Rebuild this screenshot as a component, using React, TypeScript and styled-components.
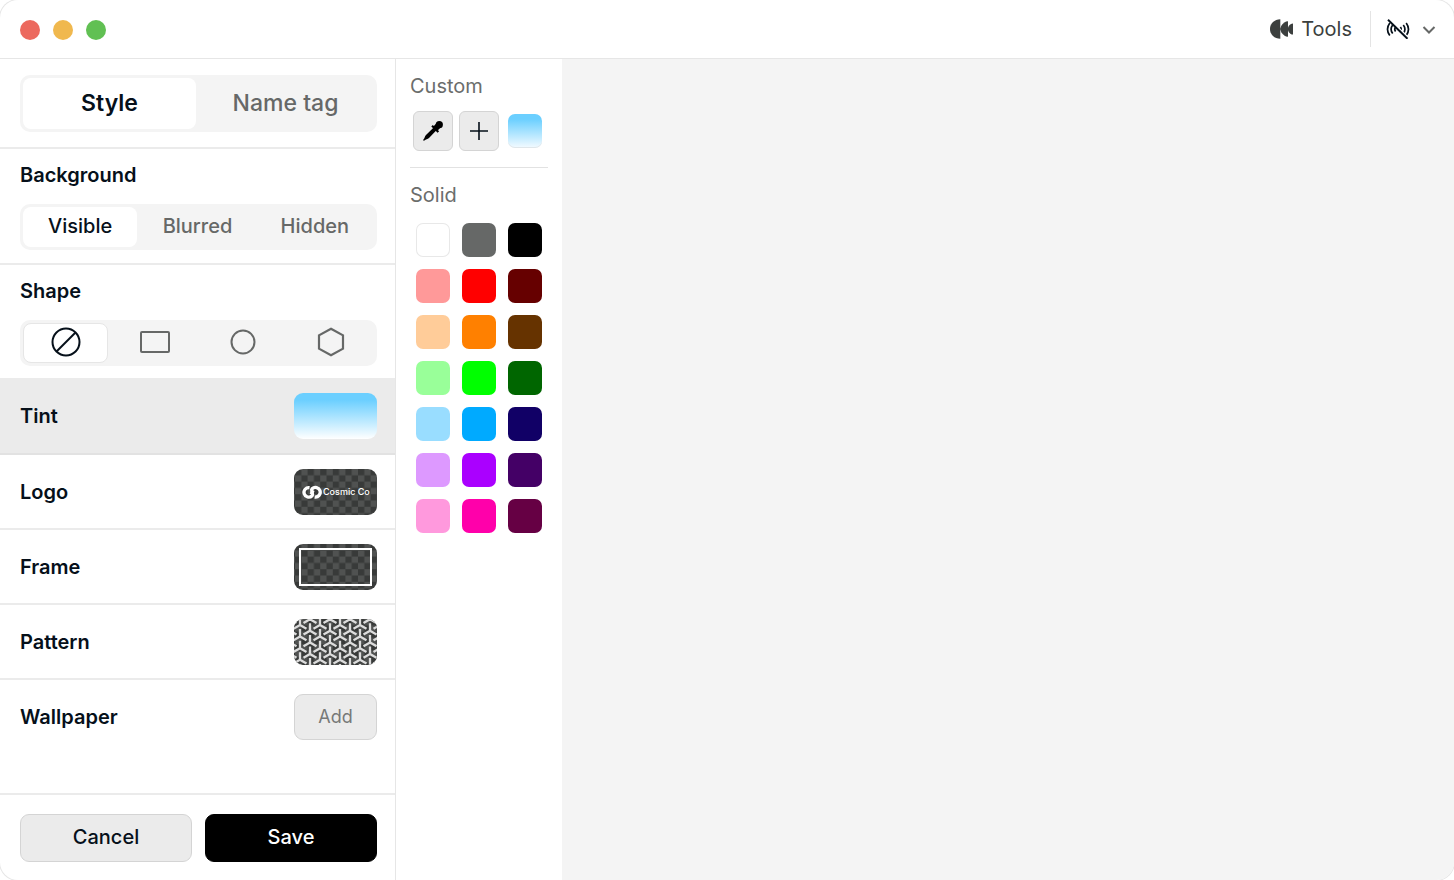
import React, { useState } from "react";
import styled, { createGlobalStyle, css } from "styled-components";

const GlobalStyle = createGlobalStyle`
  * { box-sizing: border-box; }
  body {
    margin: 0;
    background: #fff;
    font-family: Inter, "Liberation Sans", sans-serif;
    font-size: 20px;
    line-height: 24px;
    color: #06101a;
  }
  button { font: inherit; color: inherit; padding: 0; border: 0; background: none; cursor: pointer; }
`;

const Window = styled.div`
  display: flex;
  flex-direction: column;
  min-height: 100vh;
  border-radius: 18px;
  overflow: hidden;
  background: #fff;
  box-shadow: 0 0 0 1px #e6e6e6;
`;

const TitleBar = styled.header`
  display: flex;
  align-items: center;
  justify-content: space-between;
  height: 59px;
  padding: 0 18px 0 20px;
  border-bottom: 1px solid #e6e6e6;
`;

const Lights = styled.div`
  display: flex;
  gap: 13px;
  padding-top: 2px;
`;

const Light = styled.button<{ $color: string }>`
  width: 20px;
  height: 20px;
  border-radius: 50%;
  && { background: ${(p) => p.$color}; }
`;

const Actions = styled.div`
  display: flex;
  align-items: center;
`;

const ToolsButton = styled.button`
  display: flex;
  align-items: center;
  gap: 8px;
  && {
    padding-right: 18px;
    color: #3c3f3e;
  }
`;

const CameraButton = styled.button`
  display: flex;
  align-items: center;
  gap: 12px;
  height: 36px;
  && {
    padding-left: 15px;
    border-left: 1px solid #e4e4e4;
  }
`;

const Body = styled.div`
  display: flex;
  flex: 1;
`;

const Sidebar = styled.aside`
  display: flex;
  flex-direction: column;
  flex: none;
  width: 396px;
  border-right: 1px solid #e6e6e6;
`;

const Section = styled.section<{ $last?: boolean }>`
  padding: 14px 18px ${(p) => (p.$last ? "12px" : "13px")} 20px;
  border-bottom: ${(p) => (p.$last ? "0" : "2px")} solid #ebebeb;
`;

const TabSection = styled(Section)`
  padding-top: 16px;
  padding-bottom: 15px;
`;

const Group = styled.fieldset`
  margin: 0;
  padding: 0;
  border: 0;
  min-width: 0;
`;

const GroupTitle = styled.legend`
  padding: 0;
  margin-bottom: 17px;
  font-weight: 600;
`;

const Segments = styled.div<{ $large?: boolean; $wide?: boolean }>`
  display: flex;
  gap: ${(p) => (p.$wide ? 5 : 3)}px;
  height: ${(p) => (p.$large ? 57 : 46)}px;
  padding: 3px 5px 3px 3px;
  border-radius: 10px;
  background: #f4f4f4;
`;

const segment = css<{ $active: boolean }>`
  flex: 1 1 0;
  display: flex;
  align-items: center;
  justify-content: center;
  padding-bottom: 2px;
  border-radius: 8px;
  color: ${(p) => (p.$active ? "#06101a" : "#666867")};
  background: ${(p) => (p.$active ? "#fff" : "transparent")};
`;

const Tab = styled.button<{ $active: boolean }>`
  && {
    ${segment}
    font-size: 23px;
    font-weight: ${(p) => (p.$active ? 600 : 500)};
  }
`;

const Option = styled.label<{ $active: boolean; $outlined?: boolean }>`
  ${segment}
  position: relative;
  font-weight: 500;
  cursor: pointer;
  ${(p) => p.$outlined && p.$active && "border: 1px solid #e6e6e6;"}
`;

const HiddenRadio = styled.input`
  position: absolute;
  inset: 0;
  width: 100%;
  height: 100%;
  margin: 0;
  opacity: 0;
  cursor: pointer;
`;

const LayerRow = styled.button<{ $active?: boolean; $last?: boolean }>`
  && {
    display: flex;
    align-items: center;
    justify-content: space-between;
    height: ${(p) => (p.$active ? 77 : 75)}px;
    padding: 0 18px 0 20px;
    font-weight: 600;
    border-bottom: 2px solid ${(p) => (p.$last ? "transparent" : p.$active ? "#e2e2e2" : "#ebebeb")};
    background: ${(p) => (p.$active ? "#ebebeb" : "transparent")};
  }
`;

const Thumb = styled.span`
  display: flex;
  width: 83px;
  height: 46px;
  border-radius: 9px;
  overflow: hidden;
`;

const TintThumb = styled(Thumb)`
  background: linear-gradient(#6bcfff 15%, #fff);
`;

const AddThumb = styled(Thumb)`
  align-items: center;
  justify-content: center;
  border: 1px solid #d4d4d4;
  background: #ebebeb;
  color: #777978;
  font-size: 18px;
  font-weight: 400;
`;

const Footer = styled.footer`
  display: grid;
  grid-template-columns: 1fr 1fr;
  gap: 13px;
  margin-top: auto;
  padding: 19px 18px 18px 20px;
  border-top: 2px solid #ebebeb;
`;

const FooterButton = styled.button<{ $primary?: boolean }>`
  && {
    height: 48px;
    padding-bottom: 2px;
    border-radius: 9px;
    font-weight: 500;
    border: 1px solid ${(p) => (p.$primary ? "#000" : "#d4d4d4")};
    background: ${(p) => (p.$primary ? "#000" : "#ebebeb")};
    color: ${(p) => (p.$primary ? "#fff" : "#06101a")};
  }
`;

const Picker = styled.aside`
  flex: none;
  width: 166px;
  padding: 15px 14px;
`;

const PickerGroup = styled.section`
  & + & {
    margin-top: 13px;
    padding-top: 15px;
    border-top: 1px solid #e2e2e2;
  }
`;

const PickerTitle = styled.h2`
  margin: 0 0 10px;
  font-size: 20px;
  font-weight: 400;
  color: #6b6d6c;
`;

const SwatchGrid = styled.div`
  display: grid;
  grid-template-columns: repeat(3, 46px);
  grid-auto-rows: 46px;
  place-items: center;
`;

const PickerTool = styled.button`
  && {
    display: flex;
    align-items: center;
    justify-content: center;
    width: 40px;
    height: 40px;
    border: 1px solid #d4d4d4;
    border-radius: 6px;
    background: #ebebeb;
  }
`;

const Swatch = styled.button<{ $fill: string; $outlined?: boolean }>`
  && {
    width: 34px;
    height: 34px;
    border-radius: 7px;
    background: ${(p) => p.$fill};
    ${(p) => p.$outlined && "box-shadow: inset 0 0 0 1px #e8e8e8;"}
  }
`;

const GradientSwatch = styled(Swatch)`
  && { box-shadow: inset 0 -1px 0 #dfe6ea; }
`;

const Canvas = styled.main`
  flex: 1;
  background: #f4f4f4;
`;

const ToolsIcon = () => (
  <svg width="24" height="22" viewBox="0 0 24 22" fill="#3c3f3e" aria-hidden="true">
    <path d="M11.300 1.200v19.600C5.500 20.800 1 16.500 1 11s4.500-9.800 10.300-9.800Z" />
    <path d="M19 3.200v15.600c-2.600 0-5.100-2-6.700-4.600L11 11l1.300-3.200C13.900 5.200 16.400 3.200 19 3.200Z" />
    <path d="M24 5.500v11c-1.700 0-3.200-1-4.300-2.600L18.500 11l1.200-2.900C20.800 6.500 22.300 5.500 24 5.500Z" />
  </svg>
);

const CameraOffIcon = () => (
  <svg width="24" height="20" viewBox="0 0 24 20" fill="none" stroke="#06101a" strokeWidth="1.700" aria-hidden="true">
    <path d="M3.800 4C1 7.800 1 12.700 3.800 16.500M6.700 6c-2 2.600-2 5.900 0 8.500M9.600 8c-1.100 1.500-1.100 3 0 4.500" />
    <path d="M20.200 4c2.800 3.800 2.800 8.700 0 12.500M17.300 6c2 2.600 2 5.900 0 8.500M14.400 8c1.100 1.500 1.100 3 0 4.500" />
    <path d="m3.200-.200 19.500 19" stroke="#fff" strokeWidth="1.500" />
    <path d="m2 .8 19.500 19" strokeWidth="1.900" />
  </svg>
);

const ChevronIcon = () => (
  <svg width="14" height="10" viewBox="0 0 14 10" fill="none" stroke="#666867" strokeWidth="2" aria-hidden="true">
    <path d="M1.500 3 7 8.500 12.500 3" />
  </svg>
);

const NoneIcon = () => (
  <svg width="30" height="30" viewBox="0 0 30 30" fill="none" stroke="currentColor" strokeWidth="2" aria-hidden="true">
    <circle cx="15" cy="15" r="13.500" />
    <path d="m5.500 24.500 19-19" />
  </svg>
);

const RectIcon = () => (
  <svg width="32" height="24" viewBox="0 0 32 24" fill="none" stroke="currentColor" strokeWidth="2" aria-hidden="true">
    <rect x="2" y="2" width="28" height="20" rx="1" />
  </svg>
);

const CircleIcon = () => (
  <svg width="26" height="26" viewBox="0 0 26 26" fill="none" stroke="currentColor" strokeWidth="2" aria-hidden="true">
    <circle cx="13" cy="13" r="11.500" />
  </svg>
);

const HexagonIcon = () => (
  <svg width="28" height="30" viewBox="0 0 28 30" fill="none" stroke="currentColor" strokeWidth="2.200" aria-hidden="true">
    <path d="M14 1.800 26 8.400v13.200L14 28.200 2 21.600V8.400Z" />
  </svg>
);

const DropperIcon = () => (
  <svg width="22" height="22" viewBox="0 0 22 22" aria-hidden="true">
    <circle cx="17.300" cy="4.700" r="3.600" />
    <path d="m10.800 4.900 6.300 6.300-1.500 1.500-6.300-6.300Z" />
    <path d="m14 3.800 4.200 4.200-2.600 2.600-4.200-4.200Z" />
    <path d="m11.400 7.800 2.800 2.800-7.200 7.400c-1.400 1.300-3.200 1.200-4.500 2.600-.8.500-1.600-.3-1.100-1.100 1.400-1.300 1.300-3.100 2.600-4.500Z" />
  </svg>
);

const PlusIcon = () => (
  <svg width="20" height="20" viewBox="0 0 20 20" stroke="#06101a" strokeWidth="1.600" aria-hidden="true">
    <path d="M10 1v18M1 10h18" />
  </svg>
);

const Checker = ({ id }: { id: string }) => (
  <>
    <defs>
      <pattern id={id} width="12.600" height="12.600" patternUnits="userSpaceOnUse" x="1" y="0">
        <rect width="12.600" height="12.600" fill="#505251" />
        <path d="M0 0h6.300v6.300H0zM6.300 6.300h6.300v6.300H6.300z" fill="#383a39" />
      </pattern>
    </defs>
    <rect width="83" height="46" fill={`url(#${id})`} />
  </>
);

const LogoArt = () => (
  <svg width="83" height="46" viewBox="0 0 83 46" aria-hidden="true">
    <Checker id="logo-checker" />
    <g fill="none" stroke="#fff" strokeWidth="3.300">
      <path d="M15.500 18.600a4.800 4.800 0 1 0 2.600 8.200c1-1.200.3-3-1.800-3.800" />
      <path d="M20.700 28a4.800 4.800 0 1 0-2.600-8.200c-1 1.200-.3 3 1.800 3.800" />
    </g>
    <text x="29" y="26" fill="#fff" fontFamily="Inter, sans-serif" fontSize="9" fontWeight="500">
      Cosmic Co
    </text>
  </svg>
);

const FrameArt = () => (
  <svg width="83" height="46" viewBox="0 0 83 46" aria-hidden="true">
    <Checker id="frame-checker" />
    <rect x="6" y="5" width="71" height="36" fill="none" stroke="#fff" strokeWidth="2" />
  </svg>
);

const triStars = Array.from({ length: 10 }, (_, col) =>
  Array.from({ length: 6 }, (_, row) => ({
    x: col * 10 - 4,
    y: row * 11.6 + (col % 2 ? -5.600 : 0.2),
  })),
).flat();

const PatternArt = () => (
  <svg width="83" height="46" viewBox="0 0 83 46" aria-hidden="true">
    <Checker id="pattern-checker" />
    <g stroke="#dcdcdc" strokeWidth="2.300" fill="none">
      {triStars.map(({ x, y }) => (
        <path key={`${x}:${y}`} d={`M${x} ${y}v-7.500M${x} ${y}l6.500 3.750M${x} ${y}l-6.500 3.750`} />
      ))}
    </g>
  </svg>
);

const backgrounds = ["Visible", "Blurred", "Hidden"];

const shapes = [
  { name: "None", Icon: NoneIcon },
  { name: "Rectangle", Icon: RectIcon },
  { name: "Circle", Icon: CircleIcon },
  { name: "Hexagon", Icon: HexagonIcon },
];

const solids = [
  "#ffffff", "#666867", "#000000",
  "#ff9999", "#ff0000", "#660000",
  "#ffcc99", "#ff8000", "#663300",
  "#99ff99", "#00ff00", "#006600",
  "#99ddff", "#00aaff", "#110066",
  "#dd99ff", "#aa00ff", "#440066",
  "#ff99dd", "#ff00aa", "#660044",
];

export default function App() {
  const [tab, setTab] = useState("Style");
  const [background, setBackground] = useState("Visible");
  const [shape, setShape] = useState("None");

  return (
    <>
      <GlobalStyle />
      <Window>
        <TitleBar>
          <Lights>
            <Light $color="#ec695e" aria-label="Close" />
            <Light $color="#f0b84e" aria-label="Minimise" />
            <Light $color="#61c053" aria-label="Zoom" />
          </Lights>
          <Actions>
            <ToolsButton>
              <ToolsIcon />
              Tools
            </ToolsButton>
            <CameraButton aria-label="Camera off">
              <CameraOffIcon />
              <ChevronIcon />
            </CameraButton>
          </Actions>
        </TitleBar>
        <Body>
          <Sidebar>
            <TabSection>
              <Segments $large role="tablist">
                {["Style", "Name tag"].map((name) => (
                  <Tab key={name} role="tab" aria-selected={tab === name} $active={tab === name} onClick={() => setTab(name)}>
                    {name}
                  </Tab>
                ))}
              </Segments>
            </TabSection>
            <Section>
              <Group>
                <GroupTitle>Background</GroupTitle>
                <Segments>
                  {backgrounds.map((name) => (
                    <Option key={name} $active={background === name}>
                      <HiddenRadio type="radio" name="background" checked={background === name} onChange={() => setBackground(name)} />
                      {name}
                    </Option>
                  ))}
                </Segments>
              </Group>
            </Section>
            <Section $last>
              <Group>
                <GroupTitle>Shape</GroupTitle>
                <Segments $wide>
                  {shapes.map(({ name, Icon }) => (
                    <Option key={name} $active={shape === name} $outlined>
                      <HiddenRadio type="radio" name="shape" aria-label={name} checked={shape === name} onChange={() => setShape(name)} />
                      <Icon />
                    </Option>
                  ))}
                </Segments>
              </Group>
            </Section>
            <LayerRow $active>
              Tint
              <TintThumb />
            </LayerRow>
            <LayerRow>
              Logo
              <Thumb><LogoArt /></Thumb>
            </LayerRow>
            <LayerRow>
              Frame
              <Thumb><FrameArt /></Thumb>
            </LayerRow>
            <LayerRow>
              Pattern
              <Thumb><PatternArt /></Thumb>
            </LayerRow>
            <LayerRow $last>
              Wallpaper
              <AddThumb>Add</AddThumb>
            </LayerRow>
            <Footer>
              <FooterButton>Cancel</FooterButton>
              <FooterButton $primary>Save</FooterButton>
            </Footer>
          </Sidebar>
          <Picker>
            <PickerGroup>
              <PickerTitle>Custom</PickerTitle>
              <SwatchGrid>
                <PickerTool aria-label="Pick a colour"><DropperIcon /></PickerTool>
                <PickerTool aria-label="Add a colour"><PlusIcon /></PickerTool>
                <GradientSwatch $fill="linear-gradient(#6bcfff 15%, #f4fbff)" aria-label="Sky gradient" />
              </SwatchGrid>
            </PickerGroup>
            <PickerGroup>
              <PickerTitle>Solid</PickerTitle>
              <SwatchGrid>
                {solids.map((color) => (
                  <Swatch key={color} $fill={color} $outlined={color === "#ffffff"} aria-label={color} />
                ))}
              </SwatchGrid>
            </PickerGroup>
          </Picker>
          <Canvas />
        </Body>
      </Window>
    </>
  );
}
